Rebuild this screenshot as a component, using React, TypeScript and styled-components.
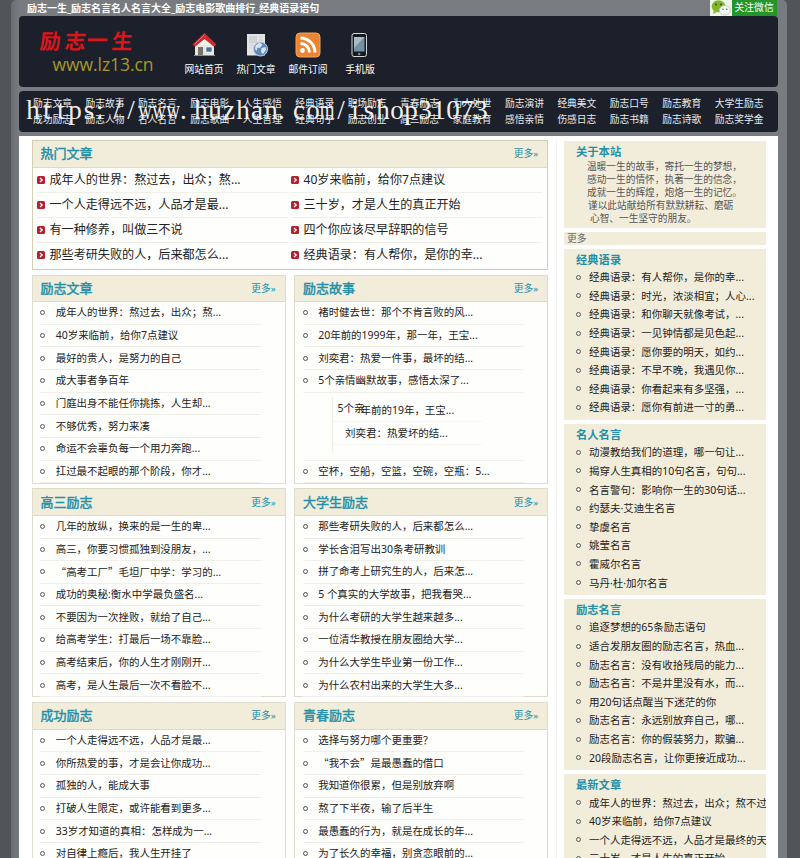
import React from "react";
import styled, { createGlobalStyle } from "styled-components";

const Global = createGlobalStyle`
  * { box-sizing: border-box; }
  html, body { margin: 0; padding: 0; background: #50555a; }
  body {
    width: 800px; height: 858px; overflow: hidden;
    font-family: "Noto Sans", "Noto Sans CJK SC", sans-serif;
    color: #222;
  }
  ul { list-style: none; margin: 0; padding: 0; }
  h2, h3, p { margin: 0; }
`;

const Page = styled.div`
  width: 776px; height: 858px; margin-left: 11px; padding: 0 9px 0 8px;
  background: linear-gradient(90deg, #686d71 0, #787c80 8px, #787c80 100%);
  border-radius: 5px 5px 0 0;
  overflow: hidden;
`;
const TopBar = styled.div`
  height: 16px; display: flex; justify-content: space-between;
  padding-left: 8px; color: #fff; font-size: 10px; font-weight: 700; line-height: 17px;
  white-space: nowrap;
`;
const Wechat = styled.div`
  display: flex; width: 67.5px; height: 16px; background: #24952a; margin-right: 1px;
  font-weight: 400; font-size: 9.8px; line-height: 16px;
  svg { display: block; flex: none; margin-right: 3px; }
`;
const Header = styled.header`
  height: 71px; border-radius: 4px; background: #1b202a; display: flex;
  padding-left: 19px;
`;
const Logo = styled.div`
  width: 140px; padding-top: 4px;
  svg { display: block; }
`;
const Tools = styled.nav`
  display: flex; padding-top: 16px;
`;
const Tool = styled.div`
  width: 52px; display: flex; flex-direction: column; align-items: center;
  color: #fff; font-size: 9.8px; line-height: 14px; white-space: nowrap;
  svg { display: block; margin-bottom: 5px; }
`;
const NavBox = styled.nav`
  position: relative; height: 41px; margin-top: 4px; border-radius: 4px;
  background: #1b202a; padding: 5px 0 0 14px;
`;
const NavGrid = styled.div`
  display: grid; grid-template-columns: repeat(14, 52.45px); grid-auto-rows: 16px;
  font-size: 9.75px; line-height: 16px; color: #e9eaec; white-space: nowrap;
`;
const Watermark = styled.div`
  position: absolute; left: 7px; top: 2px; display: flex; height: 34px;
  font-family: "Liberation Serif", serif; font-size: 27px; line-height: 34px; color: #f0f0f0;
`;
const Glyph = styled.span<{ $wide: boolean; $left: boolean }>`
  display: inline-flex; justify-content: ${(p) => (p.$left ? "flex-start" : "center")}; width: 14px;
  transform: scaleX(${(p) => (p.$wide ? 0.7 : 1)});
`;
const Body = styled.div`
  display: flex; height: 724px; margin-top: 4px; background: #fff; padding: 4px 0 0 12.6px;
`;
const Main = styled.main`
  width: 525px; height: 720px; border-right: 1px solid #f3f3f0; flex: none;
`;
const Panel = styled.section<{ $hot?: boolean }>`
  position: relative;
  width: ${(p) => (p.$hot ? 516.5 : 254)}px;
  height: ${(p) => (p.$hot ? 129.5 : 209)}px;
  border: 1px solid ${(p) => (p.$hot ? "#d3d0b6" : "#dfdccb")};
  background: #fefefc;
`;
const PanelHead = styled.div`
  height: 26.6px; display: flex; align-items: center; justify-content: space-between;
  padding: 0 9px 0 8px; background: #f2eddb; border-bottom: 1px solid #dfdbc3; color: #2390a8;
`;
const PanelTitle = styled.h2`
  font-size: 13px; font-weight: 400; line-height: 25px;
  -webkit-text-stroke: 0.45px #2390a8;
`;
const More = styled.a`
  font-size: 9.7px; line-height: 25px;
`;
const HotList = styled.ul`
  display: grid; grid-template-columns: 251px 251px; column-gap: 3px;
  grid-auto-rows: 25px; padding-left: 4.4px; margin-top: 0.6px;
`;
const HotItem = styled.li`
  display: flex; align-items: center; border-bottom: 1px solid #f0efe8;
  font-size: 12.1px; line-height: 24px; white-space: nowrap;
  svg { margin-right: 4.5px; flex: none; }
  &:nth-last-child(-n + 2) { border-bottom-color: transparent; }
`;
const Grid = styled.div`
  display: grid; grid-template-columns: 254px 254px; column-gap: 8.5px;
  grid-auto-rows: 213.8px; margin-top: 5px;
`;
const List = styled.ul`
  width: 221px; margin-left: 7.6px;
`;
const Item = styled.li<{ $bare?: boolean }>`
  height: 22.65px; display: flex; align-items: center; white-space: nowrap;
  font-size: 10.48px; line-height: 21px;
  border-bottom: 1px solid ${(p) => (p.$bare ? "transparent" : "#f0efe8")};
`;
const Dot = styled.i<{ $gap: number }>`
  width: 5px; height: 5px; border: 1px solid #555; border-radius: 50%; flex: none;
  margin-right: ${(p) => p.$gap}px;
`;
const Ghost = styled.div`
  position: absolute; left: 37px; top: 121px; width: 150px; height: 55px;
  border-left: 1px solid #efeee4; font-size: 10.48px; white-space: nowrap;
`;
const GhostLine = styled.div<{ $x: number; $h: number }>`
  display: flex; height: ${(p) => p.$h}px; padding-left: ${(p) => p.$x}px;
  line-height: 22px; border-bottom: 1px solid #f6f5ef;
`;
const GhostTail = styled.span`
  padding-top: 2px; margin-left: -4px;
`;
const Side = styled.aside`
  width: 202px; margin: 0.5px 0 0 7.4px; display: flex; flex-direction: column; gap: 4px;
`;
const SideBox = styled.section<{ $h: number }>`
  height: ${(p) => p.$h}px; flex: none; background: #f2eddb; overflow: hidden;
  padding: 3px 0 0 12px; white-space: nowrap;
`;
const SideTitle = styled.h3`
  font-size: 11.3px; font-weight: 700; line-height: 16px; color: #2390a8;
`;
const About = styled.p<{ $indent: number }>`
  font-size: 9.7px; line-height: 13px; color: #555; padding-left: ${(p) => p.$indent}px;
`;
const MoreBar = styled.div`
  height: 13px; flex: none; background: #f2eddb; color: #666;
  padding-left: 3px; font-size: 9.8px; line-height: 13px;
`;
const SideItem = styled.li`
  display: flex; align-items: center; height: 18.6px; font-size: 10.48px; line-height: 18px;
`;
const Cjk = styled.span`
  font-family: "Noto Sans CJK SC", sans-serif;
`;

const Text = ({ children }: { children: string }) => (
  <span>
    {children.split(/([“”])/).map((s, i) => (/[“”]/.test(s) ? <Cjk key={i}>{s}</Cjk> : s))}
  </span>
);

const Arrow = () => (
  <svg width="8" height="8" viewBox="0 0 8 8">
    <rect width="8" height="8" rx="1.5" fill="#b5202c" />
    <path d="M3 2l2.2 2L3 6" fill="none" stroke="#fff" strokeWidth="1.3" />
  </svg>
);

const HomeIcon = () => (
  <svg width="26" height="26" viewBox="0 0 26 26">
    <path d="M4 13h19v10.500H4z" fill="#e8e6e0" />
    <path d="M7 15h5v8.500H7z" fill="#77746e" />
    <path d="M15 15h6v5h-6z" fill="#49709c" stroke="#fff" strokeWidth=".6" />
    <path d="M13.500 4L23 13H4z" fill="#f3f1ee" />
    <path d="M1.500 12.500L13.500 1 25.500 12.500l-2.500 2.200-9.500-7.700-9.500 7.700z" fill="#d8272b" />
    <path d="M4 12L13.500 2.500" stroke="#f3706b" strokeWidth="1" />
    <path d="M3 23h21v1H3z" fill="#8a9568" />
  </svg>
);
const ArticleIcon = () => (
  <svg width="26" height="26" viewBox="0 0 26 26">
    <path d="M4 2h18v21.500H4z" fill="#e3e4e3" />
    <path d="M6.500 4.500h7v6h-7zM6.500 13h4M6.500 16h3" fill="#d3d5d5" stroke="#cdcfd0" />
    <path d="M15.500 5h4.500M15.500 8h4.500" stroke="#cdcfd0" />
    <circle cx="17.500" cy="17" r="7" fill="#6387b8" stroke="#b9cce3" />
    <path d="M12.500 13.500l4-3 3 2-2 3-3 .5-1 3-1.500-2zM18.500 16l4-1 .5 3-3 4-2-2z" fill="#d5e4f1" />
  </svg>
);
const FeedIcon = () => (
  <svg width="26" height="26" viewBox="0 0 26 26">
    <rect x="1" y="1" width="24" height="24" rx="4" fill="#ec8432" stroke="#f2a45e" />
    <circle cx="7.500" cy="18.500" r="2.400" fill="#fff" />
    <path d="M5.500 11.500a9 9 0 019 9M5.500 6a14.500 14.500 0 0114.500 14.500" fill="none" stroke="#fff" strokeWidth="3" />
  </svg>
);
const PhoneIcon = () => (
  <svg width="26" height="26" viewBox="0 0 26 26">
    <rect x="5" y="1.500" width="14.500" height="23" rx="2" fill="#171b20" stroke="#d5d8da" />
    <path d="M7 5h10.500v14.500H7z" fill="#7592a5" />
    <path d="M7 5h10.500L7 16z" fill="#a9bbc6" />
    <circle cx="12.200" cy="22" r="1.200" fill="#888" />
  </svg>
);
const WechatIcon = () => (
  <svg width="22" height="16" viewBox="0 0 22 16">
    <path d="M0 0h22v16H0z" fill="#eef5e9" />
    <ellipse cx="8.500" cy="6.300" rx="6.800" ry="6" fill="#82b72b" />
    <path d="M4 10l-1 4 4-2z" fill="#82b72b" />
    <ellipse cx="14.800" cy="10.300" rx="5.500" ry="4.700" fill="#f4f6f4" stroke="#b4bbb3" strokeWidth=".7" />
    <path d="M16 14l3 1.500-.5-3z" fill="#e1e5e0" />
    <circle cx="6" cy="4.500" r="1" fill="#2f4d13" />
    <circle cx="11" cy="4.500" r="1" fill="#2f4d13" />
    <circle cx="13" cy="9.200" r=".7" fill="#555" />
    <circle cx="16.800" cy="9.200" r=".7" fill="#555" />
  </svg>
);
const LogoArt = () => (
  <svg width="124" height="62" viewBox="0 0 124 62">
    <g fill="#d9161c" fontFamily="Noto Sans CJK SC, sans-serif" fontWeight="700" fontSize="21" transform="skewX(-6)">
      <text x="4" y="29">励</text>
      <text x="29" y="29">志</text>
      <text x="51" y="28">一</text>
      <text x="76" y="29">生</text>
    </g>
    <text x="14.500" y="51" fill="#a8982c" fontFamily="Open Sans, sans-serif" fontSize="17.500" textLength="101">www.lz13.cn</text>
  </svg>
);

const NAV = [
  "励志文章 励志故事 励志名言 励志电影 人生感悟 经典语录 职场励志 青春励志 为人处世 励志演讲 经典美文 励志口号 励志教育 大学生励志",
  "成功励志 励志人物 名人名言 励志歌曲 人生哲理 经典句子 励志创业 高三励志 家庭教育 感悟亲情 伤感日志 励志书籍 励志诗歌 励志奖学金",
].join(" ").split(" ");

const HOT = [
  "成年人的世界：熬过去，出众；熬...", "40岁来临前，给你7点建议",
  "一个人走得远不远，人品才是最...", "三十岁，才是人生的真正开始",
  "有一种修养，叫做三不说", "四个你应该尽早辞职的信号",
  "那些考研失败的人，后来都怎么...", "经典语录：有人帮你，是你的幸...",
];

const PANELS = [
  { title: "励志文章", items: ["成年人的世界：熬过去，出众；熬...", "40岁来临前，给你7点建议", "最好的贵人，是努力的自己", "成大事者争百年", "门庭出身不能任你挑拣，人生却...", "不够优秀，努力来凑", "命运不会辜负每一个用力奔跑...", "扛过最不起眼的那个阶段，你才..."] },
  { title: "励志故事", ghost: true, items: ["褚时健去世：那个不肯言败的风...", "20年前的1999年，那一年，王宝...", "刘奕君：热爱一件事，最坏的结...", "5个亲情幽默故事，感悟太深了...", "", "", "", "空杯，空船，空篮，空碗，空瓶：5..."] },
  { title: "高三励志", items: ["几年的放纵，换来的是一生的卑...", "高三，你要习惯孤独到没朋友，...", "“高考工厂”毛坦厂中学：学习的...", "成功的奥秘:衡水中学最负盛名...", "不要因为一次挫败，就给了自己...", "给高考学生：打最后一场不靠脸...", "高考结束后，你的人生才刚刚开...", "高考，是人生最后一次不看脸不..."] },
  { title: "大学生励志", items: ["那些考研失败的人，后来都怎么...", "学长含泪写出30条考研教训", "拼了命考上研究生的人，后来怎...", "5 个真实的大学故事，把我看哭...", "为什么考研的大学生越来越多...", "一位清华教授在朋友圈给大学...", "为什么大学生毕业第一份工作...", "为什么农村出来的大学生大多..."] },
  { title: "成功励志", items: ["一个人走得远不远，人品才是最...", "你所热爱的事，才是会让你成功...", "孤独的人，能成大事", "打破人生限定，或许能看到更多...", "33岁才知道的真相：怎样成为一...", "对自律上瘾后，我人生开挂了"] },
  { title: "青春励志", items: ["选择与努力哪个更重要？", "“我不会”是最愚蠢的借口", "我知道你很累，但是别放弃啊", "熬了下半夜，输了后半生", "最愚蠢的行为，就是在成长的年...", "为了长久的幸福，别贪恋眼前的..."] },
];

const SIDES = [
  { title: "经典语录", items: ["经典语录：有人帮你，是你的幸...", "经典语录：时光，浓淡相宜；人心...", "经典语录：和你聊天就像考试，...", "经典语录：一见钟情都是见色起...", "经典语录：愿你要的明天，如约...", "经典语录：不早不晚，我遇见你...", "经典语录：你看起来有多坚强，...", "经典语录：愿你有前进一寸的勇..."] },
  { title: "名人名言", items: ["动漫教给我们的道理，哪一句让...", "揭穿人生真相的10句名言，句句...", "名言警句：影响你一生的30句话...", "约瑟夫·艾迪生名言", "挚虞名言", "姚莹名言", "霍威尔名言", "马丹·杜·加尔名言"] },
  { title: "励志名言", items: ["追逐梦想的65条励志语句", "适合发朋友圈的励志名言，热血...", "励志名言：没有收拾残局的能力...", "励志名言：不是井里没有水，而...", "用20句话点醒当下迷茫的你", "励志名言：永远别放弃自己，哪...", "励志名言：你的假装努力，欺骗...", "20段励志名言，让你更接近成功..."] },
  { title: "最新文章", items: ["成年人的世界：熬过去，出众；熬不过", "40岁来临前，给你7点建议", "一个人走得远不远，人品才是最终的天", "三十岁，才是人生的真正开始"] },
];

const ABOUT: [string, number][] = [
  ["温暖一生的故事，寄托一生的梦想，", 11],
  ["感动一生的情怀，执著一生的信念，", 11],
  ["成就一生的辉煌，炮烙一生的记忆。", 11],
  ["谨以此站献给所有默默耕耘、磨砺", 12],
  ["心智、一生坚守的朋友。", 14],
];

export default function App() {
  return (
    <>
      <Global />
      <Page>
        <TopBar>
          <span>励志一生_励志名言名人名言大全_励志电影歌曲排行_经典语录语句</span>
          <Wechat><WechatIcon />关注微信</Wechat>
        </TopBar>
        <Header>
          <Logo><LogoArt /></Logo>
          <Tools>
            <Tool><HomeIcon />网站首页</Tool>
            <Tool><ArticleIcon />热门文章</Tool>
            <Tool><FeedIcon />邮件订阅</Tool>
            <Tool><PhoneIcon />手机版</Tool>
          </Tools>
        </Header>
        <NavBox>
          <NavGrid>{NAV.map((n) => <span key={n}>{n}</span>)}</NavGrid>
          <Watermark>
            {[..."https://www.huzhan.com/ishop31073"].map((c, i) => (
              <Glyph key={i} $wide={/[wm]/.test(c)} $left={/[.:]/.test(c)}>{c}</Glyph>
            ))}
          </Watermark>
        </NavBox>
        <Body>
          <Main>
            <Panel $hot>
              <PanelHead><PanelTitle>热门文章</PanelTitle><More>更多»</More></PanelHead>
              <HotList>{HOT.map((t) => <HotItem key={t}><Arrow /><Text>{t}</Text></HotItem>)}</HotList>
            </Panel>
            <Grid>
              {PANELS.map((p) => (
                <Panel key={p.title}>
                  <PanelHead><PanelTitle>{p.title}</PanelTitle><More>更多»</More></PanelHead>
                  <List>
                    {p.items.map((t, i) => (
                      <Item key={i} $bare={!t && i < 6}>
                        {t && <Dot $gap={10.5} />}
                        <Text>{t}</Text>
                      </Item>
                    ))}
                  </List>
                  {p.ghost && (
                    <Ghost>
                      <GhostLine $x={4.5} $h={25}><span>5个亲</span><GhostTail>年前的19年，王宝...</GhostTail></GhostLine>
                      <GhostLine $x={12} $h={23}>刘奕君：热爱坏的结...</GhostLine>
                    </Ghost>
                  )}
                </Panel>
              ))}
            </Grid>
          </Main>
          <Side>
            <SideBox $h={87.5}>
              <SideTitle>关于本站</SideTitle>
              {ABOUT.map(([t, x]) => <About key={t} $indent={x}>{t}</About>)}
            </SideBox>
            <MoreBar>更多</MoreBar>
            {SIDES.map((s) => (
              <SideBox key={s.title} $h={171.1}>
                <SideTitle>{s.title}</SideTitle>
                <ul>{s.items.map((t) => <SideItem key={t}><Dot $gap={8} /><Text>{t}</Text></SideItem>)}</ul>
              </SideBox>
            ))}
          </Side>
        </Body>
      </Page>
    </>
  );
}
